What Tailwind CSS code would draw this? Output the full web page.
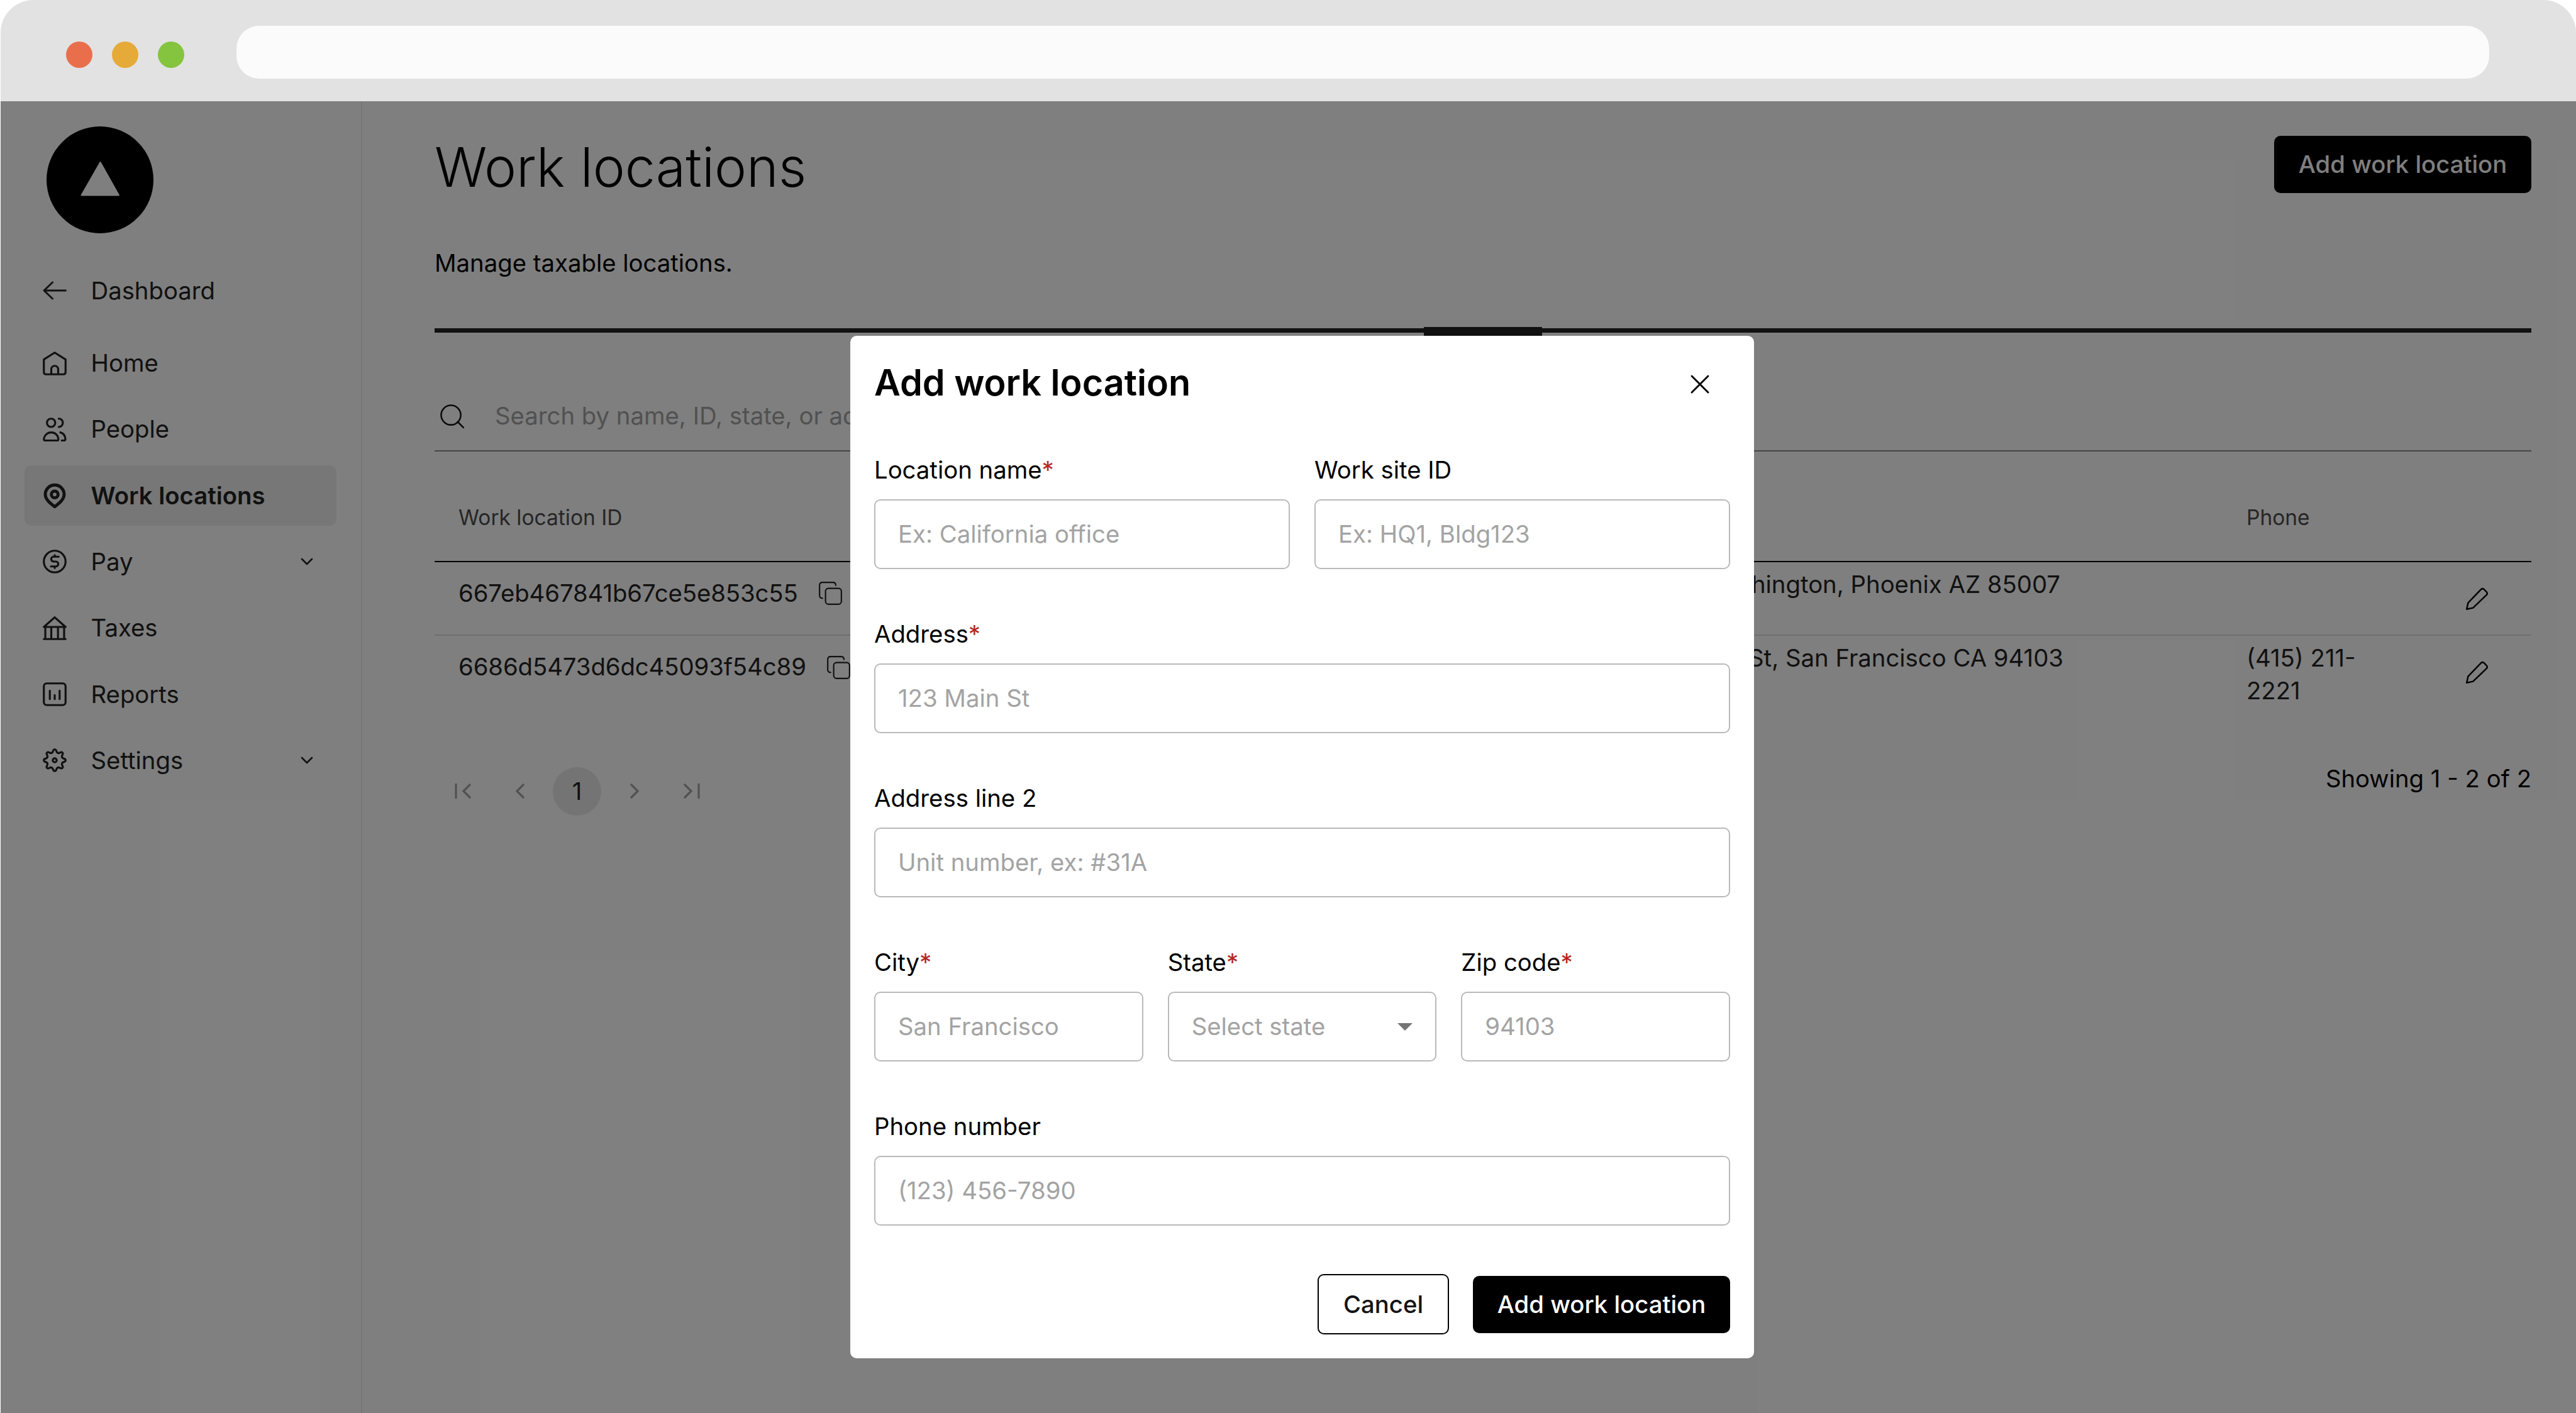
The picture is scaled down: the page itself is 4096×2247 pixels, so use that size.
<!DOCTYPE html>
<html lang="en">
<head>
<meta charset="utf-8">
<title>Work locations</title>
<script src="https://cdn.jsdelivr.net/npm/@tailwindcss/browser@4"></script>
</head>
<body class="w-[4096px] h-[2247px] overflow-hidden bg-white font-['Inter',sans-serif] text-[38.3px] leading-[52.7px] text-black">
<div class="w-full h-full pl-px flex flex-col">

  <!-- Browser chrome -->
  <header class="h-[161px] shrink-0 rounded-t-[52px] bg-[#e2e2e2] flex pl-[104px]">
    <div class="flex gap-[31px] mt-[66px]">
      <span class="size-[42px] rounded-full bg-[#e96f4c]"></span>
      <span class="size-[42px] rounded-full bg-[#e5aa38]"></span>
      <span class="size-[42px] rounded-full bg-[#85c43e]"></span>
    </div>
    <div class="ml-[83px] mt-[41px] w-[3582px] h-[84px] rounded-[36px] bg-[#fbfbfb]"></div>
  </header>

  <div class="relative flex-1 flex min-h-0">

    <!-- Sidebar -->
    <aside class="w-[575px] shrink-0 border-r-2 border-[#ededed] pl-[38px] pr-[39px] text-[#232323]">
      <div class="mt-[40px] ml-[35px] size-[170px]">
        <svg viewBox="0 0 170 170" class="size-full"><circle cx="85" cy="85" r="85" fill="#000"/><path d="M85.5 57 115 109.500H55.500Z" fill="#fff" stroke="#fff" stroke-width="2" stroke-linejoin="round"/></svg>
      </div>
      <div class="mt-[43px] h-[96px] flex items-center pl-[29px]">
        <svg viewBox="0 0 38 38" class="size-[38px]" fill="none" stroke="currentColor" stroke-width="2.900" stroke-linecap="round" stroke-linejoin="round"><path d="M36.500 19H2M15.500 6 2 19l13.500 13"/></svg>
        <span class="ml-[38.5px]">Dashboard</span>
      </div>
      <nav class="mt-[19.5px] flex flex-col gap-[9.3px]">
        <a class="h-[96px] flex items-center pl-[29px] rounded-[10px]">
          <svg viewBox="0 0 132 132" class="size-[38px]" fill="none" stroke="currentColor" stroke-width="11" stroke-linecap="round" stroke-linejoin="round"><path d="M66 6 126 44V114Q126 126 114 126H18Q6 126 6 114V44ZM47 126V98a19 19 0 0 1 38 0v28"/></svg>
          <span class="ml-[38.5px]">Home</span>
        </a>
        <a class="h-[96px] flex items-center pl-[29px] rounded-[10px]">
          <svg viewBox="0 0 132 132" class="size-[38px]" fill="none" stroke="currentColor" stroke-width="11" stroke-linecap="round" stroke-linejoin="round"><circle cx="46" cy="29" r="23"/><path d="M88 6a23 23 0 0 1 0 46M14 127H80Q87 127 86 118C84 98 69 82 47 82S9 98 6 118Q6 127 14 127ZM97 82C113 86 123 100 125 117Q125 127 116 127H105"/></svg>
          <span class="ml-[38.5px]">People</span>
        </a>
        <a class="h-[96px] flex items-center pl-[29px] rounded-[10px] bg-[#eeeeee]">
          <svg viewBox="0 0 132 132" class="size-[38px] overflow-visible" fill="none" stroke="currentColor" stroke-width="17" stroke-linejoin="round"><path d="M66 8C37 8 14 31 14 60C14 90 46 112 66 128C86 112 118 90 118 60C118 31 95 8 66 8Z"/><circle cx="66" cy="60" r="18.500"/></svg>
          <span class="ml-[38.5px] font-semibold">Work locations</span>
        </a>
        <a class="h-[96px] flex items-center pl-[29px] rounded-[10px]">
          <svg viewBox="0 0 132 132" class="size-[38px]" fill="none" stroke="currentColor" stroke-width="11" stroke-linecap="round" stroke-linejoin="round"><circle cx="66" cy="66" r="60"/><path d="M88 39H60a13.500 13.500 0 0 0 0 27h12a13.500 13.500 0 0 1 0 27H45M66 31v8M66 93v9"/></svg>
          <span class="ml-[38.5px]">Pay</span>
          <svg viewBox="0 0 18 12" class="ml-auto mr-[38px] w-[18px] h-[12px] overflow-visible" fill="none" stroke="currentColor" stroke-width="2.600" stroke-linecap="round" stroke-linejoin="round"><path d="M1 2l8 8 8-8"/></svg>
        </a>
        <a class="h-[96px] flex items-center pl-[29px] rounded-[10px]">
          <svg viewBox="0 0 132 132" class="size-[38px]" fill="none" stroke="currentColor" stroke-width="11" stroke-linecap="round" stroke-linejoin="round"><path d="M6 59 66 6l60 53ZM14 60v65M47 60v65M84 60v65M118 60v65M6 126H126"/></svg>
          <span class="ml-[38.5px]">Taxes</span>
        </a>
        <a class="h-[96px] flex items-center pl-[29px] rounded-[10px]">
          <svg viewBox="0 0 132 132" class="size-[38px]" fill="none" stroke="currentColor" stroke-width="11" stroke-linecap="round" stroke-linejoin="round"><rect x="6" y="6" width="120" height="120" rx="16"/><path d="M39 46v47M66 71v22M93 46v47"/></svg>
          <span class="ml-[38.5px]">Reports</span>
        </a>
        <a class="h-[96px] flex items-center pl-[29px] rounded-[10px]">
          <svg viewBox="0 0 132 132" class="size-[38px]" fill="none" stroke="currentColor" stroke-width="11" stroke-linecap="round" stroke-linejoin="round">
            <defs><path id="tooth" d="M49.200 25.400Q56 22.600 57 15Q59 6 66 6Q73 6 75 15Q76 22.600 82.800 25.400"/></defs>
            <use href="#tooth"/><use href="#tooth" transform="rotate(45 66 66)"/><use href="#tooth" transform="rotate(90 66 66)"/><use href="#tooth" transform="rotate(135 66 66)"/><use href="#tooth" transform="rotate(180 66 66)"/><use href="#tooth" transform="rotate(225 66 66)"/><use href="#tooth" transform="rotate(270 66 66)"/><use href="#tooth" transform="rotate(315 66 66)"/>
            <circle cx="66" cy="66" r="11"/>
          </svg>
          <span class="ml-[38.5px]">Settings</span>
          <svg viewBox="0 0 18 12" class="ml-auto mr-[38px] w-[18px] h-[12px] overflow-visible" fill="none" stroke="currentColor" stroke-width="2.600" stroke-linecap="round" stroke-linejoin="round"><path d="M1 2l8 8 8-8"/></svg>
        </a>
      </nav>
    </aside>

    <!-- Page -->
    <main class="flex-1 pl-[115px] pr-[71px] min-w-0">
      <div class="flex justify-between items-start pt-[55px] h-[231px]">
        <h1 class="mt-[2px] text-[86.2px] leading-[96px] font-light">Work locations</h1>
        <button class="w-[409px] h-[91px] rounded-[10px] bg-black text-white font-medium">Add work location</button>
      </div>
      <p>Manage taxable locations.</p>
      <div class="relative mt-[77px] h-[7px] bg-[#202220]">
        <div class="absolute left-[1573px] top-[-2px] w-[188px] h-[18px] bg-[#202220]"></div>
      </div>
      <div class="mt-[75px] h-[114px] border-b-2 border-[#8a8a8a] flex items-start pt-[31px]">
        <svg viewBox="0 0 39 39" class="mt-[8px] ml-[9px] size-[38px]" fill="none" stroke="#151515" stroke-width="2.600" stroke-linecap="round"><circle cx="17.500" cy="17.500" r="16"/><path d="M28.500 28.500 38 38"/></svg>
        <span class="ml-[49px] text-[#a3a3a3]">Search by name, ID, state, or address</span>
      </div>

      <div class="h-[176px] border-b-2 border-black flex items-center pt-[38px] pl-[38px] text-[33.500px] text-[#4d4d4d]">
        <span class="w-[2843px]">Work location ID</span>
        <span>Phone</span>
      </div>
      <div class="h-[117px] border-b-2 border-[#dedede] flex text-[#232323] pl-[38px] pr-[68px]">
        <div class="w-[1150px] pt-[23px] flex gap-[33px]"><span class="tracking-[-0.08px]">667eb467841b67ce5e853c55</span>
          <svg viewBox="0 0 129 129" class="mt-[8px] size-[37px]" fill="none" stroke="currentColor" stroke-width="7.500" stroke-linecap="round" stroke-linejoin="round"><path d="M94 20Q94 4 78 4H20Q4 4 4 20V76Q4 92 20 92"/><rect x="37" y="37" width="88" height="88" rx="16"/></svg>
        </div>
        <div class="w-[1397px] pt-[9px] text-right">1700 W Washington, Phoenix AZ 85007</div>
        <svg viewBox="0 0 42 42" class="ml-auto mt-[40px] size-[37px]" fill="none" stroke="#000" stroke-width="2.800" stroke-linejoin="round"><path d="M2.500 39.500 5 28 28.500 3.500Q31.200 1.200 34 3.800L38.500 8.500Q40.500 11 38.500 13.500L14 37Z"/></svg>
      </div>
      <div class="h-[118px] flex text-[#232323] pl-[38px] pr-[68px]">
        <div class="w-[1150px] pt-[23px] flex gap-[33px]"><span class="tracking-[-0.08px]">6686d5473d6dc45093f54c89</span>
          <svg viewBox="0 0 129 129" class="mt-[9px] size-[37px]" fill="none" stroke="currentColor" stroke-width="7.500" stroke-linecap="round" stroke-linejoin="round"><path d="M94 20Q94 4 78 4H20Q4 4 4 20V76Q4 92 20 92"/><rect x="37" y="37" width="88" height="88" rx="16"/></svg>
        </div>
        <div class="w-[1402px] pt-[9px] text-right">548 Market St, San Francisco CA 94103</div>
        <div class="ml-[291px] w-[200px] pt-[9px]">(415) 211-2221</div>
        <svg viewBox="0 0 42 42" class="ml-auto mt-[40px] size-[37px]" fill="none" stroke="#000" stroke-width="2.800" stroke-linejoin="round"><path d="M2.500 39.500 5 28 28.500 3.500Q31.200 1.200 34 3.800L38.500 8.500Q40.500 11 38.500 13.500L14 37Z"/></svg>
      </div>

      <div class="mt-[82px] flex justify-between">
        <div class="mt-[9px] -ml-px flex items-center text-[#a3a3a3]">
          <span class="w-[91px] flex justify-center"><svg viewBox="0 0 26 24" class="w-[26px] h-[24px] overflow-visible" fill="none" stroke="currentColor" stroke-width="3.200"><path d="M2 0V24M25 1 14 12l11 11"/></svg></span>
          <span class="w-[91px] flex justify-center"><svg viewBox="0 0 14 24" class="w-[14px] h-[24px] overflow-visible" fill="none" stroke="currentColor" stroke-width="3.200"><path d="M13 1 2 12l11 11"/></svg></span>
          <span class="w-[91px] flex justify-center"><span class="size-[77px] rounded-full bg-[#e8e8e8] flex items-center justify-center text-[#202020]">1</span></span>
          <span class="w-[91px] flex justify-center"><svg viewBox="0 0 14 24" class="w-[14px] h-[24px] overflow-visible" fill="none" stroke="currentColor" stroke-width="3.200"><path d="M1 1l11 11L1 23"/></svg></span>
          <span class="w-[91px] flex justify-center"><svg viewBox="0 0 26 24" class="w-[26px] h-[24px] overflow-visible" fill="none" stroke="currentColor" stroke-width="3.200"><path d="M1 1l11 11L1 23M24 0V24"/></svg></span>
        </div>
        <span class="mt-[1px]">Showing 1 - 2 of 2</span>
      </div>
    </main>

    <!-- Backdrop and dialog -->
    <div class="absolute inset-0 bg-black/50">
      <section class="absolute left-[1351px] top-[373px] w-[1437px] h-[1626px] rounded-[10px] bg-white px-[38px] flex flex-col">
        <div class="flex justify-between items-center h-[78px] mt-[38px] pr-[34px]">
          <h2 class="text-[57.500px] leading-[72px] font-semibold -mt-[6px]">Add work location</h2>
          <svg viewBox="0 0 28 28" class="size-[28px] overflow-visible" fill="none" stroke="#000" stroke-width="2.900" stroke-linecap="round"><path d="M1 1 27 27M27 1 1 27"/></svg>
        </div>
        <div class="mt-[71px] flex flex-col gap-[77px]">
          <div class="grid grid-cols-2 gap-[39px]">
            <label class="flex flex-col gap-[20px]"><span class="h-[53px]">Location name<span class="text-[#b3261e]">*</span></span>
              <span class="h-[111px] border-2 border-[#b9b9b9] rounded-[10px] flex items-center px-[36px] text-[#a3a3a3]">Ex: California office</span></label>
            <label class="flex flex-col gap-[20px]"><span class="h-[53px]">Work site ID</span>
              <span class="h-[111px] border-2 border-[#b9b9b9] rounded-[10px] flex items-center px-[36px] text-[#a3a3a3]">Ex: HQ1, Bldg123</span></label>
          </div>
          <label class="flex flex-col gap-[20px]"><span class="h-[53px]">Address<span class="text-[#b3261e]">*</span></span>
            <span class="h-[111px] border-2 border-[#b9b9b9] rounded-[10px] flex items-center px-[36px] text-[#a3a3a3]">123 Main St</span></label>
          <label class="flex flex-col gap-[20px]"><span class="h-[53px]">Address line 2</span>
            <span class="h-[111px] border-2 border-[#b9b9b9] rounded-[10px] flex items-center px-[36px] text-[#a3a3a3]">Unit number, ex: #31A</span></label>
          <div class="grid grid-cols-3 gap-[39px]">
            <label class="flex flex-col gap-[20px]"><span class="h-[53px]">City<span class="text-[#b3261e]">*</span></span>
              <span class="h-[111px] border-2 border-[#b9b9b9] rounded-[10px] flex items-center px-[36px] text-[#a3a3a3]">San Francisco</span></label>
            <label class="flex flex-col gap-[20px]"><span class="h-[53px]">State<span class="text-[#b3261e]">*</span></span>
              <span class="h-[111px] border-2 border-[#b9b9b9] rounded-[10px] flex items-center justify-between px-[36px] text-[#a3a3a3]">Select state<svg viewBox="0 0 24 12" class="w-[24px] h-[12px]" fill="#757575"><path d="M0 0H24L12 12Z"/></svg></span></label>
            <label class="flex flex-col gap-[20px]"><span class="h-[53px]">Zip code<span class="text-[#b3261e]">*</span></span>
              <span class="h-[111px] border-2 border-[#b9b9b9] rounded-[10px] flex items-center px-[36px] text-[#a3a3a3]">94103</span></label>
          </div>
          <label class="flex flex-col gap-[20px]"><span class="h-[53px]">Phone number</span>
            <span class="h-[111px] border-2 border-[#b9b9b9] rounded-[10px] flex items-center px-[36px] text-[#a3a3a3]">(123) 456-7890</span></label>
        </div>
        <div class="mt-[77px] flex justify-end items-center gap-[38px] font-medium">
          <button class="w-[209px] h-[96px] rounded-[10px] border-2 border-black text-[#141414]">Cancel</button>
          <button class="w-[409px] h-[91px] rounded-[10px] bg-black text-white">Add work location</button>
        </div>
      </section>
    </div>
  </div>
</div>
</body>
</html>
